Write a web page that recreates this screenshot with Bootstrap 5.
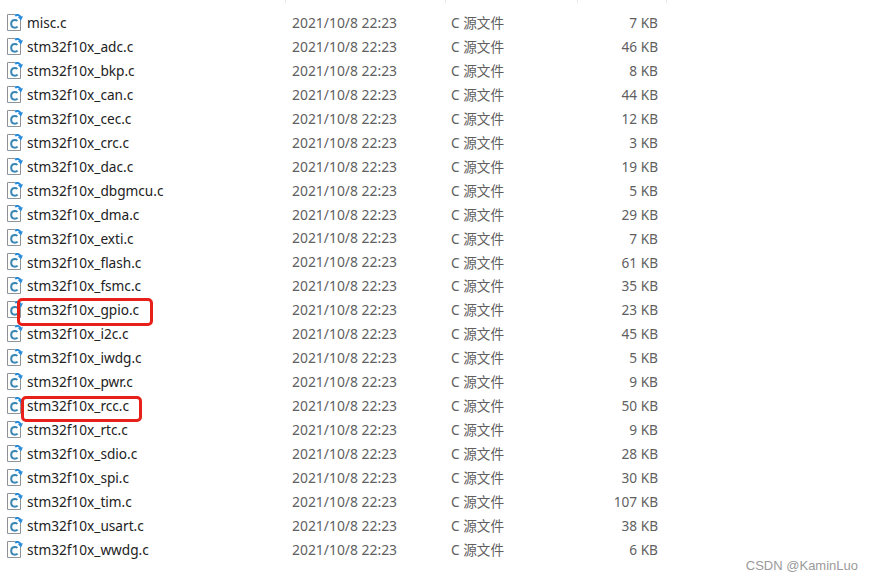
<!DOCTYPE html>
<html lang="zh">
<head>
  <meta charset="UTF-8">
  <title>stm32f10x</title>
  <link href="https://cdn.jsdelivr.net/npm/bootstrap@5.3.0/dist/css/bootstrap.min.css" rel="stylesheet">
  <style>
    html, body { height: 583px; overflow: hidden; background: #fff; }
    body { position: relative; font-family: "Noto Sans", "Noto Sans CJK SC", sans-serif; font-size: 13.65px; color: #5f5f5f; }
    .col-ticks { display: flex; height: 3px; padding-left: 285px; }
    .col-ticks span { border-left: 1px solid #e8e8e8; }
    .file-list { padding-top: 8px; }
    .file-row { display: grid; grid-template-columns: 285px 160px 132px 81px; height: 23.95px; align-items: center; line-height: 1; }
    .file-name { display: flex; align-items: center; position: relative; padding-left: 7px; color: #222; }
    .file-name svg { width: 16px; height: 18px; margin-right: 4px; flex: none; }
    .file-date { padding-left: 7px; font-size: 13.9px; }
    .file-type { padding-left: 6px; }
    .file-size { text-align: right; }
    .red-box { position: absolute; border: 3px solid #e8201a; border-radius: 5px; }
    .red-gpio { left: 17px; top: -3px; width: 136px; height: 28px; }
    .red-rcc { left: 21px; top: -1px; width: 121px; height: 26px; }
    .watermark { position: absolute; right: 14px; bottom: 8px; font-family: "Liberation Sans", sans-serif; font-size: 13px; color: #9a9a9a; }
  </style>
</head>
<body>
<svg width="0" height="0" class="d-block">
  <symbol id="c-file" viewBox="0 0 16 18">
    <path d="M8 .5H.5V16.5H13.5V6" fill="#fff" stroke="#8f9398"/>
    <path d="M8 1.6C10.6 .2 13 1 13.8 3.8" fill="none" stroke="#2a8bd8" stroke-width="2"/>
    <path d="M10.8 2.8L16 2.2 13.9 6.8Z" fill="#2a8bd8"/>
    <path d="M10.4 6.9C9.7 6.2 8.9 5.9 8 5.9 5.8 5.9 4.2 7.5 4.2 9.8S5.8 13.7 8 13.7C9 13.7 9.9 13.3 10.6 12.6" fill="none" stroke="#3a86b4" stroke-width="2"/>
  </symbol>
</svg>

<div class="col-ticks">
  <span style="width:160px"></span><span style="width:132px"></span><span style="width:89px"></span><span></span>
</div>

<div class="file-list" id="files"></div>

<div class="watermark">CSDN @KaminLuo</div>

<script>
  // nombre, KB
  const files = [
    ['misc.c', 7], ['stm32f10x_adc.c', 46], ['stm32f10x_bkp.c', 8], ['stm32f10x_can.c', 44],
    ['stm32f10x_cec.c', 12], ['stm32f10x_crc.c', 3], ['stm32f10x_dac.c', 19], ['stm32f10x_dbgmcu.c', 5],
    ['stm32f10x_dma.c', 29], ['stm32f10x_exti.c', 7], ['stm32f10x_flash.c', 61], ['stm32f10x_fsmc.c', 35],
    ['stm32f10x_gpio.c', 23], ['stm32f10x_i2c.c', 45], ['stm32f10x_iwdg.c', 5], ['stm32f10x_pwr.c', 9],
    ['stm32f10x_rcc.c', 50], ['stm32f10x_rtc.c', 9], ['stm32f10x_sdio.c', 28], ['stm32f10x_spi.c', 30],
    ['stm32f10x_tim.c', 107], ['stm32f10x_usart.c', 38], ['stm32f10x_wwdg.c', 6]
  ];
  const marked = { 'stm32f10x_gpio.c': 'red-gpio', 'stm32f10x_rcc.c': 'red-rcc' };
  document.getElementById('files').innerHTML = files.map(([name, kb]) => `
    <div class="file-row">
      <div class="file-name"><svg><use href="#c-file"/></svg>${name}${marked[name] ? `<span class="red-box ${marked[name]}"></span>` : ''}</div>
      <div class="file-date">2021/10/8 22:23</div>
      <div class="file-type">C 源文件</div>
      <div class="file-size">${kb} KB</div>
    </div>`).join('');
</script>
<script src="https://cdn.jsdelivr.net/npm/bootstrap@5.3.0/dist/js/bootstrap.bundle.min.js"></script>
</body>
</html>
